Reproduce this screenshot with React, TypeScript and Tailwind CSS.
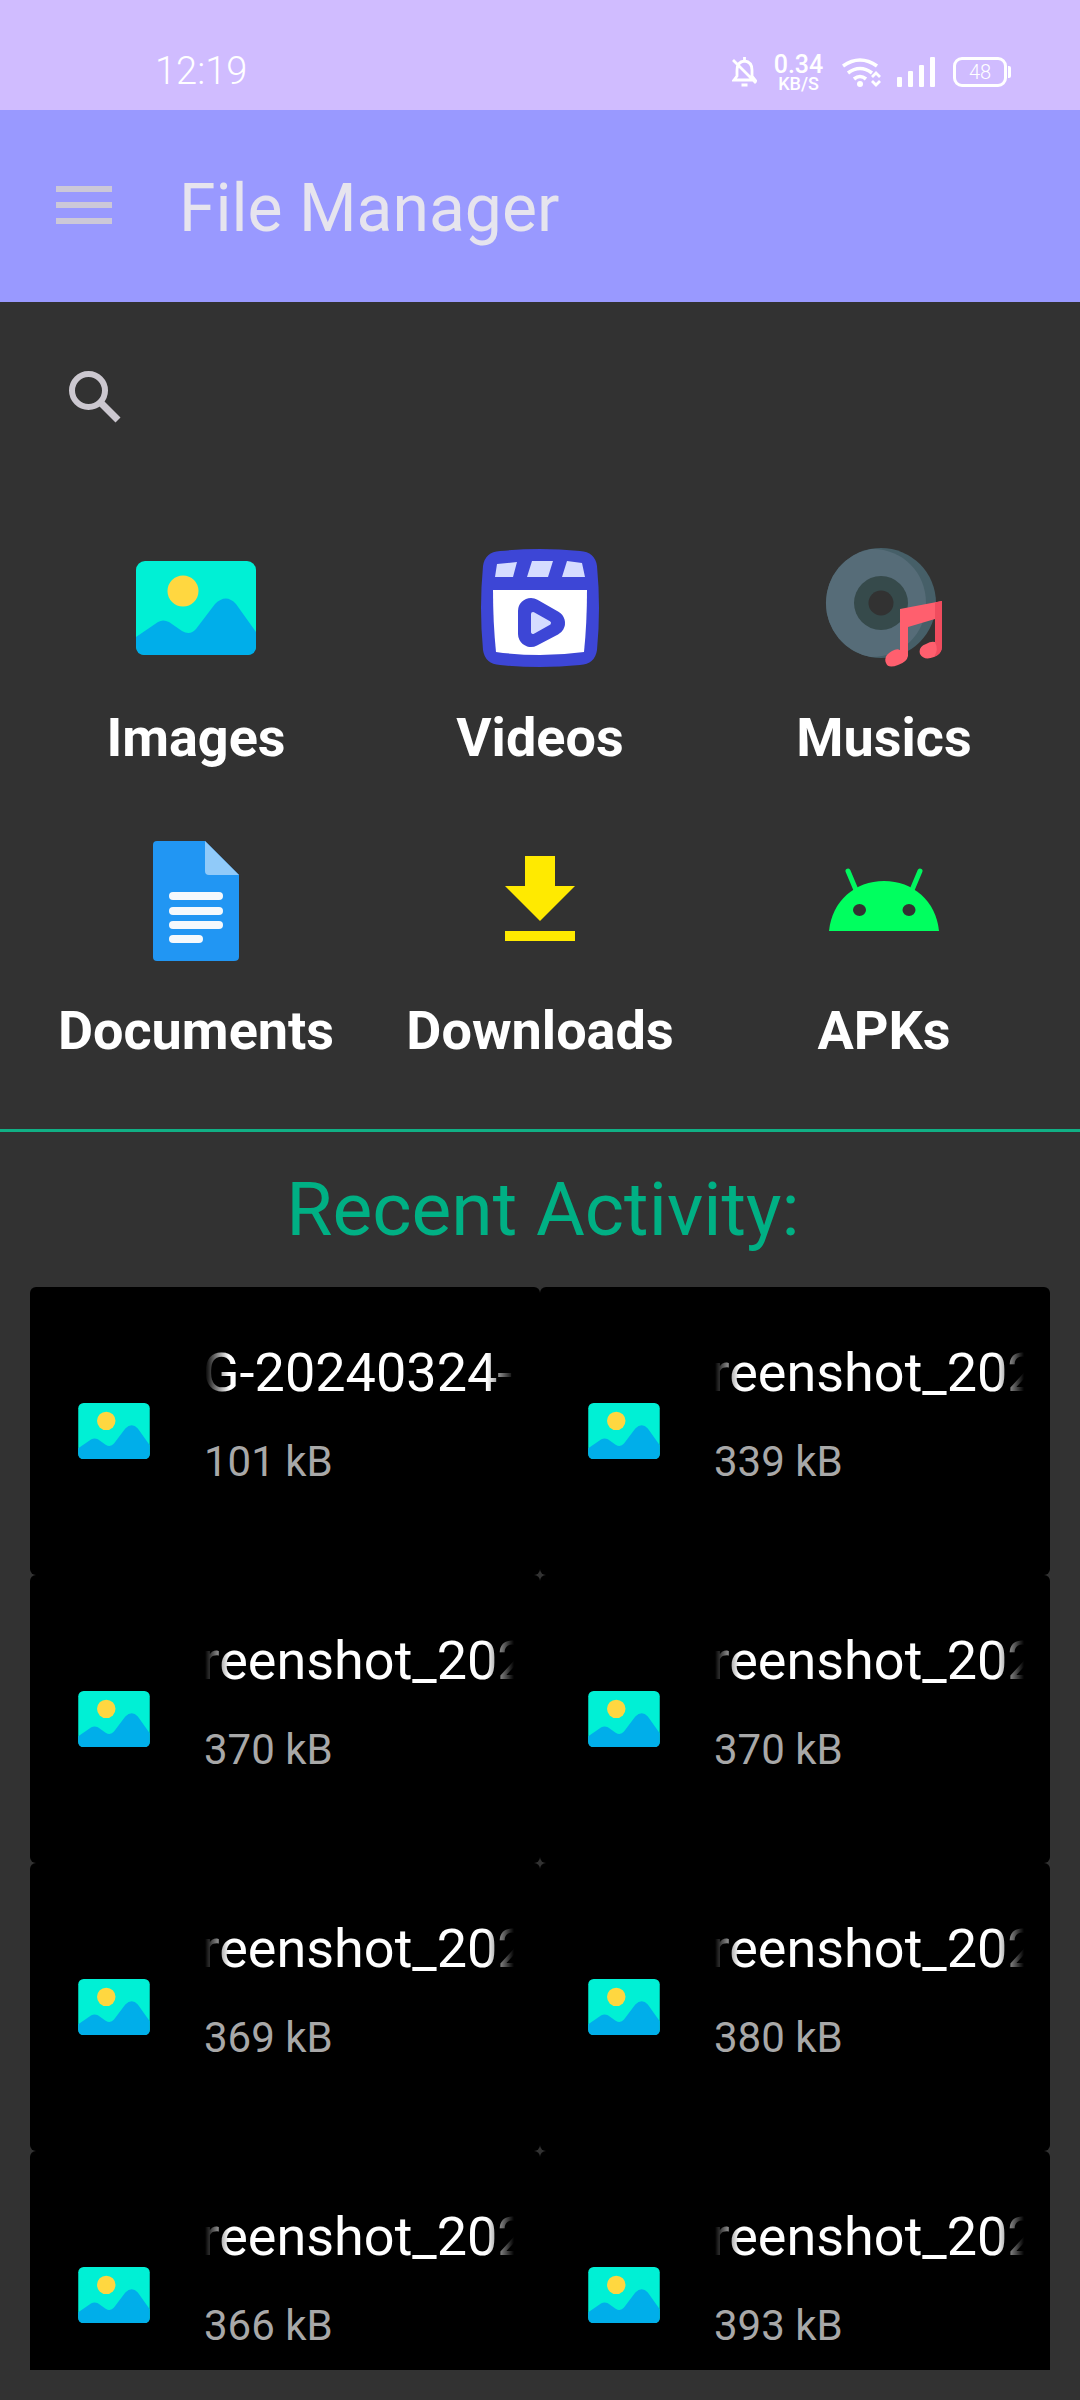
const F = "font-['Roboto',sans-serif]";

function ImageIcon({ className }: { className: string }) {
  return (
    <svg viewBox="0 0 120 94" className={className}>
      <rect width="120" height="94" rx="9" fill="#00f0d5" />
      <circle cx="47" cy="30" r="15.5" fill="#ffd740" />
      <path d="M0 76 L22 61 Q27 58 33 61 L46 70 Q54 75 60 68 L79 43 Q90 32 100 43 L120 71 V85 Q120 94 111 94 H9 Q0 94 0 85 Z" fill="#00aeea" />
    </svg>
  );
}

function VideoIcon() {
  return (
    <svg viewBox="0 0 120 120" className="w-[120px] h-[120px]">
      <path d="M20 3 Q60 -1 100 3 Q115 4 117 18 Q121 60 117 102 Q115 116 100 117 Q60 121 20 117 Q5 116 3 102 Q-1 60 3 18 Q5 4 20 3 Z" fill="#3d46d6" />
      <path d="M13 42 H107 Q107 75 104 104 Q60 110 16 104 Q13 75 13 42 Z" fill="#fff" />
      <path d="M17 16 L37 14 L33 29 H15 Z M52 13 H73 L68 29 H47 Z M87 13 L102 15 L105 29 H82 Z" fill="#d5dcff" />
      <path d="M51 63 L72 75 L51 86 Z" fill="#3d46d6" stroke="#3d46d6" strokeWidth="26" strokeLinejoin="round" />
      <path d="M53 66 L69 75 L53 84 Z" fill="#d5dcff" stroke="#d5dcff" strokeWidth="4" strokeLinejoin="round" />
    </svg>
  );
}

function MusicIcon() {
  return (
    <svg viewBox="-2 0 120 120" className="w-[120px] h-[120px]">
      <circle cx="55" cy="55" r="55" fill="#465f68" />
      <path d="M45 0.9 C76 0 100 24 100 55 C100 86 76 109 45 109.100 A55 55 0 0 1 45 0.9 Z" fill="#566c78" />
      <circle cx="55" cy="55" r="27" fill="#364a4b" />
      <circle cx="55" cy="55" r="12.500" fill="#323232" />
      <path d="M74 61 L116 53 V98 Q116 106 108 109 Q98 113 94 106 Q92 99 100 96 Q105 93 109 94 V71 L82 79 V108 Q81 114 72 117 Q62 121 60 115 Q57 108 66 103 Q71 100 74 102 Z" fill="#ff5f6e" />
      <path d="M109 54.500 L116 53 V98 Q116 106 108 109 Q113 102 109 94 Z" fill="#f04c5e" />
    </svg>
  );
}

function DocIcon() {
  return (
    <svg viewBox="0 0 86 120" className="w-[86px] h-[120px]">
      <path d="M4 0 H52 L86 34 V116 Q86 120 81 120 H4 Q0 120 0 116 V4 Q0 0 4 0 Z" fill="#2196f3" />
      <path d="M52 0 L86 34 H56 Q52 34 52 30 Z" fill="#90caf9" />
      <rect x="16" y="51" width="54" height="8" rx="4" fill="#f5f9fc" />
      <rect x="16" y="66" width="54" height="8" rx="4" fill="#f5f9fc" />
      <rect x="16" y="80" width="54" height="8" rx="4" fill="#f5f9fc" />
      <rect x="16" y="94" width="34" height="8" rx="4" fill="#f5f9fc" />
    </svg>
  );
}

function DownloadIcon() {
  return (
    <svg viewBox="0 0 70 85" className="w-[70px] h-[85px] mb-[5px]">
      <path d="M20 0 H50 V30 H70 L35 65 L0 30 H20 Z" fill="#ffea00" />
      <rect y="75" width="70" height="10" fill="#ffea00" />
    </svg>
  );
}

function AndroidIcon() {
  return (
    <svg viewBox="0 0 110 63" className="w-[110px] h-[63px] mb-[3px]">
      <path d="M19 3 L27 22 M91 3 L83 22" stroke="#00f65f" strokeWidth="5" strokeLinecap="round" />
      <path d="M0 63 C3 33 26 13 55 13 C84 13 107 33 110 63 Z" fill="#00ff5f" />
      <ellipse cx="30.500" cy="42" rx="6.500" ry="6" fill="#323232" />
      <ellipse cx="80" cy="42" rx="6.500" ry="6" fill="#323232" />
    </svg>
  );
}

const cats = [
  { label: "Images", icon: <ImageIcon className="w-[120px] h-[94px]" /> },
  { label: "Videos", icon: <VideoIcon /> },
  { label: "Musics", icon: <MusicIcon /> },
  { label: "Documents", icon: <DocIcon /> },
  { label: "Downloads", icon: <DownloadIcon /> },
  { label: "APKs", icon: <AndroidIcon /> },
];

const files = [
  { name: "IMG-20240324-WA0012.jpg", size: "101 kB", off: "-ml-[64px]" },
  { name: "Screenshot_2024", size: "339 kB", off: "-ml-[64px]" },
  { name: "Screenshot_2024", size: "370 kB", off: "-ml-[64px]" },
  { name: "Screenshot_2024", size: "370 kB", off: "-ml-[64px]" },
  { name: "Screenshot_2024", size: "369 kB", off: "-ml-[64px]" },
  { name: "Screenshot_2024", size: "380 kB", off: "-ml-[64px]" },
  { name: "Screenshot_2024", size: "366 kB", off: "-ml-[64px]" },
  { name: "Screenshot_2024", size: "393 kB", off: "-ml-[64px]" },
];

function StatusBar() {
  return (
    <div className="h-[110px] bg-[#d0bcff] flex items-start pl-[155px] pr-[69px] text-white shrink-0">
      <span className={`${F} mt-[49px] text-[38px] leading-[44px] font-light`}>12:19</span>
      <div className="ml-auto mt-[54px] flex items-start">
        <svg viewBox="0 0 25 30" className="w-[25px] h-[30px] mt-[3px]" fill="none" stroke="#fff" strokeWidth="2.800">
          <path d="M2 23 L5 19 V13 Q5 5 12.500 4 Q20 5 20 13 V19 L23 23 Z M12.500 0 V4 M9.500 28 H15.500 M1 3 L24 26" />
        </svg>
        <div className={`${F} ml-[17px] w-[49px] flex flex-col items-center font-medium`}>
          <span className="text-[25px] leading-[22px]">0.34</span>
          <span className="text-[18px] leading-[15px]">KB/S</span>
        </div>
        <svg viewBox="0 0 39 30" className="w-[39px] h-[30px] ml-[19px] mt-[3px]" fill="none" stroke="#fff" strokeWidth="3.600">
          <path d="M1 9 Q18 -3 35 9 M6 16 Q18 7 30 16" />
          <path d="M12 22 Q18 17 24 22" />
          <circle cx="18" cy="27" r="3" fill="#fff" stroke="none" />
          <path d="M30 20 L34 16 L38 20 M30 24 L34 28 L38 24" strokeWidth="2.800" />
        </svg>
        <svg viewBox="0 0 38 30" className="w-[38px] h-[30px] ml-[16px] mt-[3px]" fill="#fff">
          <rect x="0" y="20" width="5" height="10" rx="1" />
          <rect x="11" y="14" width="5" height="16" rx="1" />
          <rect x="22" y="8" width="5" height="22" rx="1" />
          <rect x="33" y="0" width="5" height="30" rx="1" />
        </svg>
        <div className="ml-[18px] mt-[3px] flex items-center">
          <div className="w-[54px] h-[30px] border-[3px] border-white rounded-[9px] flex items-center justify-center">
            <span className={`${F} text-[20px] leading-none font-light`}>48</span>
          </div>
          <div className="w-[3px] h-[12px] ml-[1px] bg-white rounded-r-[2px]" />
        </div>
      </div>
    </div>
  );
}

export default function App() {
  return (
    <div className={`${F} w-[1080px] h-[2400px] bg-[#323232] overflow-hidden flex flex-col`}>
      <StatusBar />
      <header className="h-[192px] bg-[#9999ff] flex items-center pl-[56px] shrink-0">
        <div className="w-[56px] mb-[2px] flex flex-col gap-[10px]">
          <div className="h-[6px] bg-[#ccc8d8]" />
          <div className="h-[6px] bg-[#ccc8d8]" />
          <div className="h-[6px] bg-[#ccc8d8]" />
        </div>
        <h1 className="ml-[67px] mt-[6px] text-[66px] leading-none text-[#e6e4ee] font-normal">File Manager</h1>
      </header>
      <div className="h-[188px] pl-[69px] pt-[2px] flex items-center shrink-0">
        <svg viewBox="0 0 52 52" className="w-[52px] h-[52px]" fill="none" stroke="#ccc8d0" strokeWidth="6">
          <circle cx="19.500" cy="19.500" r="16.500" />
          <path d="M31 31 L49 49" strokeWidth="7" />
        </svg>
      </div>
      <div className="mx-[24px] pt-[38px] grid grid-cols-3 h-[639px] shrink-0 content-start">
        {cats.map((c) => (
          <div key={c.label} className="h-[293px] flex flex-col items-center">
            <div className="h-[160px] w-full flex items-center justify-center">{c.icon}</div>
            <span className="mt-[20px] text-[54px] leading-[60px] font-bold text-white">{c.label}</span>
          </div>
        ))}
      </div>
      <div className="h-[3px] bg-[#10b085] shrink-0" />
      <h2 className="h-[155px] pl-[6px] shrink-0 flex items-center justify-center text-[75px] leading-none text-[#00b084] font-normal">Recent Activity:</h2>
      <div className="mx-[30px] grid grid-cols-2 overflow-hidden h-[1083px] shrink-0">
        {files.map((f, i) => (
          <div key={i} className="h-[288px] bg-black rounded-[6px] flex items-center pl-[48px]">
            <ImageIcon className="w-[72px] h-[56px] shrink-0" />
            <div className="ml-[55px] w-[309px] h-full pt-[54px]">
              <div className="overflow-hidden whitespace-nowrap [mask-image:linear-gradient(to_right,transparent,black_24px,black_282px,transparent)]">
                <span className={`${f.off} inline-block text-[54px] leading-[64px] text-white`}>{f.name}</span>
              </div>
              <div className="mt-[32px] -ml-[1px] text-[42px] leading-[50px] text-[#a8a8a8]">{f.size}</div>
            </div>
          </div>
        ))}
      </div>
    </div>
  );
}
